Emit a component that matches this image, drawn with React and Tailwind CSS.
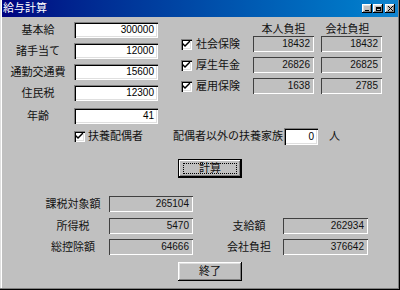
import React from "react";

const sunken =
  "shadow-[inset_1px_1px_#808080,inset_2px_2px_#000,inset_-1px_-1px_#fff,inset_-2px_-2px_#dfdfdf]";
const staticEdge = "shadow-[inset_1px_1px_#404040,inset_-1px_-1px_#fff]";
const raised =
  "shadow-[inset_-1px_-1px_#000,inset_1px_1px_#fff,inset_-2px_-2px_#808080,inset_2px_2px_#dfdfdf]";

const Input = ({ value, className = "" }) => (
  <div className={`h-[16px] bg-white flex items-center justify-end pr-[4px] text-[10px] text-black ${sunken} ${className}`}>
    {value}
  </div>
);

const ReadOnly = ({ value, className = "" }) => (
  <div className={`h-[16px] bg-[#c0c0c0] flex items-center justify-end pr-[4px] text-[10px] text-[#111] ${staticEdge} ${className}`}>
    {value}
  </div>
);

const Check = () => (
  <div className={`w-[11px] h-[11px] bg-white shrink-0 flex items-center justify-center ${sunken}`}>
    <svg width="7" height="7" viewBox="0 0 7 7">
      <path d="M0 2 L0 4 L2 6 L7 1 L7 -1 L2 4 Z" fill="#000" />
    </svg>
  </div>
);

const Button = ({ label, isDefault }) => (
  <div
    className={`w-[64px] h-[19px] bg-[#c0c0c0] flex items-center justify-center ${
      isDefault
        ? "border border-black shadow-[inset_-1px_-1px_#000,inset_1px_1px_#fff,inset_-2px_-2px_#808080]"
        : raised
    }`}
  >
    {isDefault ? (
      <div className="w-[54px] h-[11px] border border-dotted border-black flex items-center justify-center">{label}</div>
    ) : (
      label
    )}
  </div>
);

const leftRows = [
  ["基本給", "300000", ""],
  ["諸手当て", "12000", "mt-[5px]"],
  ["通勤交通費", "15600", "mt-[5px]"],
  ["住民税", "12300", "mt-[5px]"],
  ["年齢", "41", "mt-[7px]"],
];

const insRows = [
  ["社会保険", "18432", "18432"],
  ["厚生年金", "26826", "26825"],
  ["雇用保険", "1638", "2785"],
];

export default function App() {
  return (
    <div
      className="w-[400px] h-[290px] bg-[#c0c0c0] text-[11px] text-[#111] leading-none flex flex-col px-[2px] shadow-[inset_-1px_-1px_#000,inset_-2px_-2px_#808080,inset_1px_0_#dfdfdf,inset_2px_0_#fff] overflow-hidden"
      style={{ fontFamily: '"Liberation Sans", "Noto Sans CJK JP", sans-serif' }}
    >
      {/* title bar */}
      <div className="h-[17px] shrink-0 flex items-center justify-between bg-gradient-to-r from-[#000080] to-[#1084d0] pl-[1px] pr-[3px]">
        <span className="text-white text-[11px]">給与計算</span>
        <div className="flex items-center gap-[1px]">
          <div className={`w-[10px] h-[9px] bg-[#c0c0c0] flex items-end justify-center pb-[2px] ${raised}`}>
            <div className="w-[4px] h-[1px] bg-black" />
          </div>
          <div className={`w-[10px] h-[9px] bg-[#c0c0c0] flex items-center justify-center ${raised}`}>
            <div className="w-[5px] h-[4px] border border-black border-t-2" />
          </div>
          <div className={`ml-[1px] w-[10px] h-[9px] bg-[#c0c0c0] flex items-center justify-center ${raised}`}>
            <svg width="5" height="5" viewBox="0 0 5 5">
              <path d="M0 0 L5 5 M5 0 L0 5" stroke="#000" strokeWidth="1" />
            </svg>
          </div>
        </div>
      </div>

      {/* top section */}
      <div className="flex pl-[6px] pt-[5px]">
        <div className="w-[150px] flex flex-col">
          {leftRows.map(([label, value, mt]) => (
            <div key={label} className={`flex items-center h-[16px] ${mt}`}>
              <span className="w-[60px] text-center">{label}</span>
              <Input value={value} className="ml-[6px] w-[84px]" />
            </div>
          ))}
        </div>

        <div className="ml-[23px] flex flex-col">
          <div className="h-[14px] flex items-center pl-[72px] gap-[7px]">
            <span className="w-[61px] text-center">本人負担</span>
            <span className="w-[61px] text-center -ml-[4px]">会社負担</span>
          </div>
          {insRows.map(([label, a, b], i) => (
            <div key={label} className={`flex items-center h-[16px] ${i ? "mt-[5px]" : ""}`}>
              <Check />
              <span className="ml-[4px] w-[57px]">{label}</span>
              <ReadOnly value={a} className="w-[61px]" />
              <ReadOnly value={b} className="ml-[7px] w-[61px]" />
            </div>
          ))}
        </div>
      </div>

      {/* spouse row */}
      <div className="flex items-center h-[17px] mt-[4px] pl-[72px]">
        <Check />
        <span className="ml-[3px] w-[85px]">扶養配偶者</span>
        <span className="w-[111px]">配偶者以外の扶養家族</span>
        <Input value="0" className="w-[34px] h-[17px]" />
        <span className="ml-[11px]">人</span>
      </div>

      {/* calc button */}
      <div className="flex mt-[14px] pl-[176px]">
        <Button label="計算" isDefault />
      </div>

      {/* results */}
      <div className="flex flex-col mt-[18px]">
        <div className="flex items-center h-[16px]">
          <span className="ml-[38px] w-[66px] text-center">課税対象額</span>
          <ReadOnly value="265104" className="ml-[3px] w-[84px]" />
        </div>
        <div className="flex items-center h-[16px] mt-[6px]">
          <span className="ml-[38px] w-[66px] text-center">所得税</span>
          <ReadOnly value="5470" className="ml-[3px] w-[84px]" />
          <span className="ml-[26px] w-[60px] text-center">支給額</span>
          <ReadOnly value="262934" className="ml-[4px] w-[85px]" />
        </div>
        <div className="flex items-center h-[16px] mt-[5px]">
          <span className="ml-[38px] w-[66px] text-center">総控除額</span>
          <ReadOnly value="64666" className="ml-[3px] w-[84px]" />
          <span className="ml-[26px] w-[60px] text-center">会社負担</span>
          <ReadOnly value="376642" className="ml-[4px] w-[85px]" />
        </div>
      </div>

      {/* close button */}
      <div className="flex mt-[7px] pl-[176px]">
        <Button label="終了" />
      </div>
    </div>
  );
}
